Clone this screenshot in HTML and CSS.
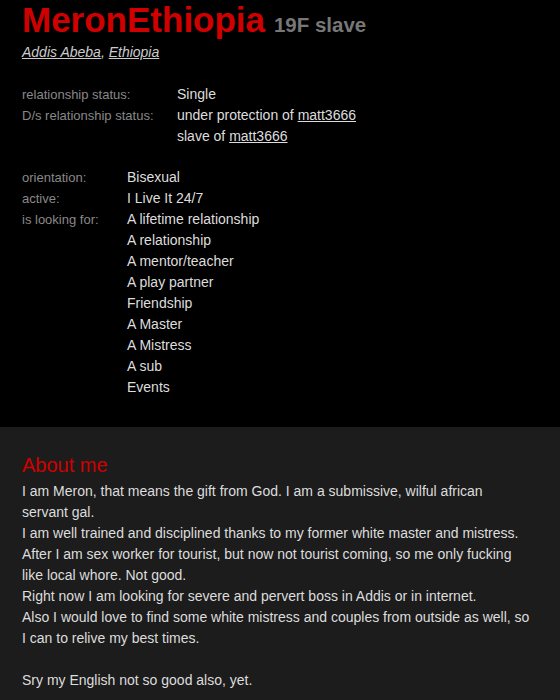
FILE: index.html
```html
<!DOCTYPE html>
<html>
<head>
<meta charset="utf-8">
<link rel="stylesheet" href="styles.css">
</head>
<body>
<div class="top">
  <h1 class="title"><span class="name">MeronEthiopia</span> <span class="meta">19F slave</span></h1>
  <p class="loc"><a href="#">Addis Abeba</a>, <a href="#">Ethiopia</a></p>

  <div class="facts facts-wide">
    <div class="label">relationship status:</div>
    <div class="value">Single</div>
    <div class="label">D/s relationship status:</div>
    <div class="value">under protection of <a href="#">matt3666</a><br>slave of <a href="#">matt3666</a></div>
  </div>

  <div class="facts facts-narrow">
    <div class="label">orientation:</div>
    <div class="value">Bisexual</div>
    <div class="label">active:</div>
    <div class="value">I Live It 24/7</div>
    <div class="label">is looking for:</div>
    <div class="value">A lifetime relationship<br>A relationship<br>A mentor/teacher<br>A play partner<br>Friendship<br>A Master<br>A Mistress<br>A sub<br>Events</div>
  </div>
</div>
<div class="about">
  <h2 class="about-title">About me</h2>
  <p class="about-text">I am Meron, that means the gift from God. I am a submissive, wilful african servant gal.<br>I am well trained and disciplined thanks to my former white master and mistress.<br>After I am sex worker for tourist, but now not tourist coming, so me only fucking like local whore. Not good.<br>Right now I am looking for severe and pervert boss in Addis or in internet.<br>Also I would love to find some white mistress and couples from outside as well, so I can to relive my best times.<br><br>Sry my English not so good also, yet.</p>
</div>
</body>
</html>
```
FILE: styles.css
```css
html, body {
  margin: 0;
  padding: 0;
  background: #000;
  font-family: "Liberation Sans", Arial, sans-serif;
  color: #ddd;
}
a { color: #ddd; text-decoration: underline; }
.top {
  padding: 0 30px 29px 22px;
}
.title {
  margin: 0;
  font-weight: bold;
  line-height: 39px;
}
.name {
  color: #d00000;
  font-size: 35px;
}
.meta {
  color: #777;
  font-size: 20.5px;
}
.loc {
  margin: 0;
  font-size: 14px;
  font-style: italic;
  line-height: 16px;
  color: #ccc;
}
.loc a { color: #ccc; }
.facts {
  display: grid;
  font-size: 14px;
  line-height: 21px;
}
.facts-wide {
  grid-template-columns: 155px 1fr;
  margin-top: 24px;
}
.facts-narrow {
  grid-template-columns: 105px 1fr;
  margin-top: 20px;
}
.label {
  color: #888;
  font-size: 13px;
}
.value { color: #ddd; }
.about {
  background: #1c1c1c;
  padding: 26px 30px 30px 22px;
  min-height: 300px;
}
.about-title {
  margin: 0;
  font-weight: normal;
  color: #d00000;
  font-size: 20px;
  line-height: 24px;
}
.about-text {
  margin: 4px 0 0;
  font-size: 14px;
  line-height: 21px;
  color: #ddd;
}
```
